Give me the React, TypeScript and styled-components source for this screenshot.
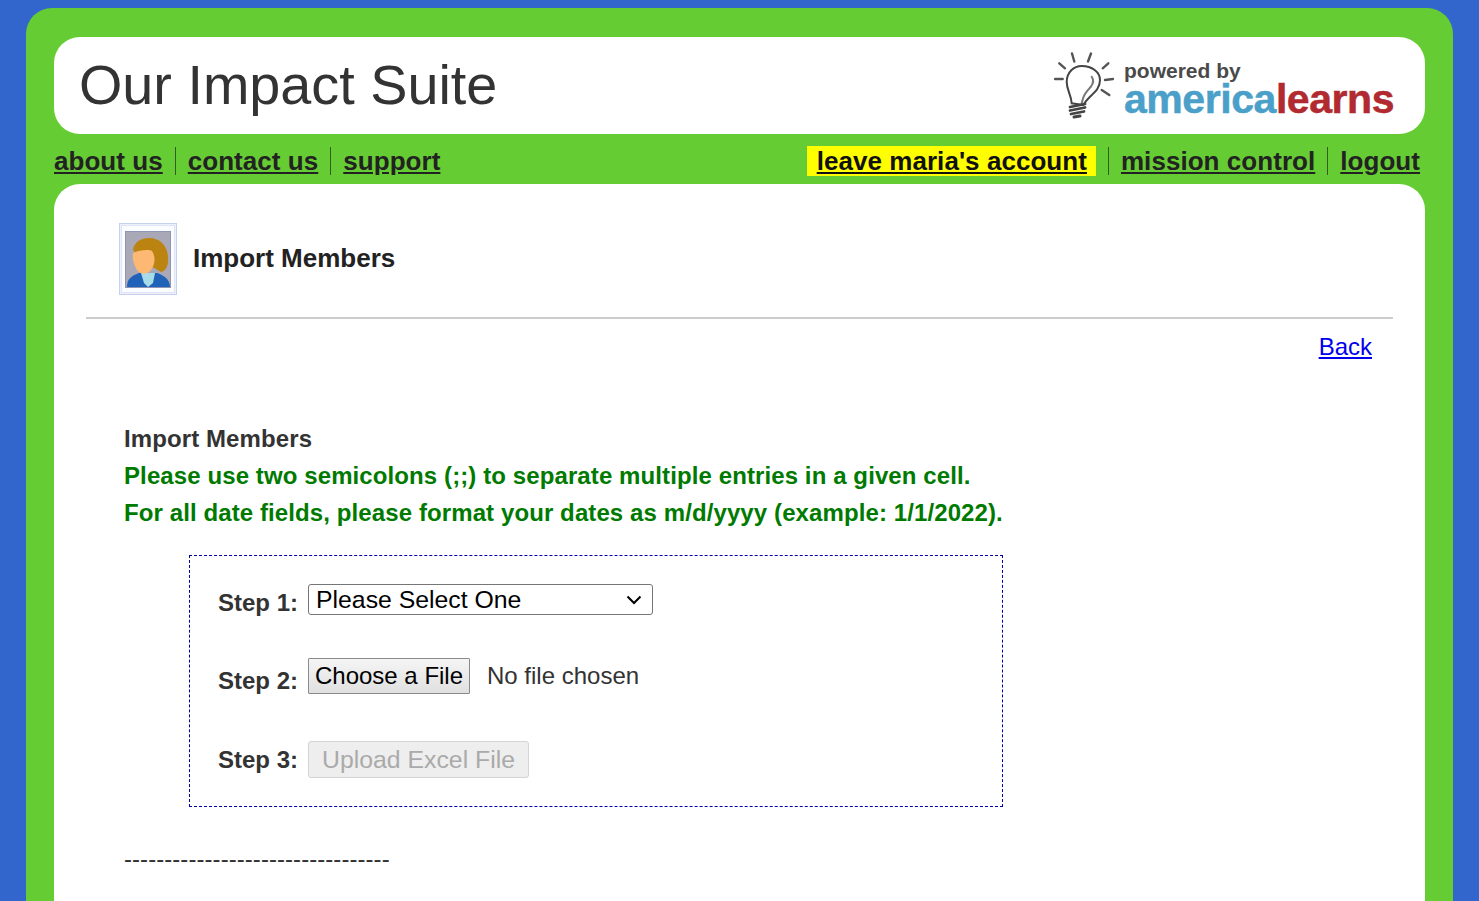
import React from "react";
import styled, { createGlobalStyle } from "styled-components";

const Global = createGlobalStyle`
  html, body { margin: 0; padding: 0; height: 100%; overflow: hidden; background: #3366cc; }
  body { font-family: "Liberation Sans", Arial, sans-serif; color: #333; }
`;
const Shell = styled.div`
  margin: 8px 26px 0;
  height: 893px;
  overflow: hidden;
  background: #66cc33;
  border-radius: 26px 26px 0 0;
  padding: 29px 28px 0;
`;
const Header = styled.header`
  height: 97px;
  background: #fff;
  border-radius: 26px;
  display: flex;
  align-items: center;
  justify-content: space-between;
  padding: 0 31px 0 25px;
`;
const Title = styled.h1`
  margin: 0 0 1px;
  font-size: 55.75px;
  font-weight: 400;
  color: #333;
  line-height: 64px;
`;
const Logo = styled.div`
  display: flex;
  align-items: flex-start;
  gap: 10px;
  height: 72px;
  margin-top: 4px;
`;
const LogoText = styled.div`
  display: flex;
  flex-direction: column;
  padding-top: 9px;
`;
const Powered = styled.span`
  font-size: 21px;
  font-weight: 700;
  line-height: 20px;
  color: #4a4a4a;
`;
const Brand = styled.span`
  font-size: 41px;
  font-weight: 700;
  line-height: 36px;
  letter-spacing: -0.45px;
  -webkit-text-stroke: 0.5px currentColor;
  color: #4aa0c8;
  white-space: nowrap;
`;
const BrandRed = styled.span`
  color: #b02a30;
`;
const NavBar = styled.nav`
  height: 50px;
  display: flex;
  justify-content: space-between;
  align-items: flex-start;
  padding: 12px 5px 0 0;
  box-sizing: border-box;
`;
const NavGroup = styled.div`
  display: flex;
  align-items: center;
`;
const NavLink = styled.a<{ $highlight?: boolean; $first?: boolean; $last?: boolean }>`
  font-size: 26px;
  font-weight: 700;
  line-height: 30px;
  letter-spacing: 0.05px;
  text-decoration: underline;
  padding: 0 ${(p) => (p.$last ? "0" : p.$highlight ? "9px" : "12px")} 0 ${(p) => (p.$first ? "0" : p.$highlight ? "10px" : "12px")};
  background: ${(p) => (p.$highlight ? "#ffff00" : "transparent")};
  color: ${(p) => (p.$highlight ? "#111" : "#222")};
`;
const Sep = styled.span<{ $gap?: number }>`
  width: 1px;
  height: 28px;
  background: #2f5f1a;
  margin-left: ${(p) => p.$gap ?? 0}px;
`;
const Panel = styled.main`
  background: #fff;
  border-radius: 26px 26px 0 0;
  height: 800px;
  padding: 0 32px;
`;
const PageHead = styled.div`
  height: 135px;
  box-sizing: border-box;
  display: flex;
  align-items: center;
  gap: 16px;
  padding: 15px 0 0 33px;
  border-bottom: 2px solid #ccc;
`;
const PageTitle = styled.h2`
  margin: 0;
  font-size: 26px;
  font-weight: 700;
  color: #222;
`;
const BackRow = styled.div`
  display: flex;
  justify-content: flex-end;
  padding: 13px 21px 0 0;
  height: 60px;
`;
const BackLink = styled.a`
  font-size: 24px;
  line-height: 30px;
  color: #0000ee;
  text-decoration: underline;
`;
const Body = styled.div`
  padding: 28px 0 0 38px;
`;
const Line = styled.div<{ $green?: boolean }>`
  font-size: 24px;
  font-weight: 700;
  line-height: 37px;
  letter-spacing: 0.1px;
  color: ${(p) => (p.$green ? "#007a00" : "#333")};
`;
const StepBox = styled.div`
  width: 814px;
  height: 252px;
  box-sizing: border-box;
  margin: 24px 0 0 65px;
  border: 1px dashed #0000aa;
  padding: 28px 0 0 28px;
  display: flex;
  flex-direction: column;
`;
const StepRow = styled.div<{ $height: number }>`
  display: flex;
  align-items: flex-start;
  gap: 10px;
  height: ${(p) => p.$height}px;
`;
const StepLabel = styled.label<{ $top: number }>`
  font-size: 24px;
  font-weight: 700;
  line-height: 30px;
  color: #333;
  margin-top: ${(p) => p.$top}px;
`;
const Select = styled.select`
  width: 345px;
  height: 31px;
  font-family: "Liberation Sans", Arial, sans-serif;
  font-size: 24.8px;
  color: #000;
  appearance: none;
  background: #fff url("data:image/svg+xml,%3Csvg xmlns='http://www.w3.org/2000/svg' width='16' height='10'%3E%3Cpath d='M1.5 1.5 L8 8 L14.5 1.5' fill='none' stroke='%23000' stroke-width='2'/%3E%3C/svg%3E") no-repeat right 10px center;
  border: 1px solid #767676;
  border-radius: 3px;
  padding: 0 7px;
`;
const FileButton = styled.button`
  height: 36px;
  width: 162px;
  padding: 0;
  font-family: "Liberation Sans", Arial, sans-serif;
  font-size: 24px;
  color: #000;
  background: linear-gradient(#f5f5f5, #e0e0e0);
  border: 1px solid #8a8a8a;
  border-radius: 1px;
`;
const NoFile = styled.span`
  font-size: 24px;
  line-height: 36px;
  margin-left: 7px;
  color: #333;
`;
const UploadButton = styled.button`
  height: 37px;
  width: 221px;
  padding: 0;
  font-family: "Liberation Sans", Arial, sans-serif;
  font-size: 24.8px;
  color: #aaa;
  background: #eee;
  border: 1px solid #d4d4d4;
  border-radius: 3px;
`;
const Dashes = styled.div`
  margin-top: 34px;
  font-size: 24px;
  line-height: 36px;
  letter-spacing: 0.06px;
  color: #333;
`;
const PortraitSvg = styled.svg`
  filter: blur(0.5px);
  margin-top: 2px;
`;
const BulbSvg = styled.svg`
  filter: blur(0.3px);
`;

const Bulb = () => (
  <BulbSvg width="60" height="68" viewBox="0 0 60 68" fill="none" stroke="#444" strokeLinecap="round">
    <g strokeWidth="2.4" stroke="#555">
      <path d="M18 1.5 L20.3 9.5" />
      <path d="M37 1.5 L34 9.5" />
      <path d="M5.3 11.3 L11 16.3" />
      <path d="M54.3 11.3 L48.7 16.3" />
      <path d="M1 27 L8.7 27" />
      <path d="M59 27 L51 28" />
      <path d="M47.7 38 L55.3 43" />
    </g>
    <path d="M17.7 51.3 C17 42 12.7 38 12.7 30 C12.7 20 20 14 27.7 14 C38 14 46 20 46 28 C46 36 41 40 36 44.7 C33 47.5 31 50 29.3 53 Z" strokeWidth="2" />
    <path d="M37.7 24.7 C40 28 39.5 31 37 34.5 C34 38 31 41 29.5 45 C28.5 48 28 50 27.7 51.3" strokeWidth="2" stroke="#777" />
    <path d="M16 55 L31 52 M16 58.5 L31 55.5 M17 62 L30 59.5" strokeWidth="2.8" stroke="#444" />
    <path d="M20 65 L26 64" strokeWidth="3" stroke="#444" />
  </BulbSvg>
);

const Portrait = () => (
  <PortraitSvg width="58" height="72" viewBox="0 0 58 72">
    <rect x="0.5" y="0.5" width="57" height="71" fill="#eef1fb" stroke="#c5cfee" />
    <rect x="2.5" y="2.5" width="53" height="67" fill="#fbfcff" stroke="#dfe4f6" />
    <rect x="6.5" y="8.5" width="45" height="56" fill="#a8a8b6" stroke="#9294b4" />
    <path d="M14 27 C15 19 22 15 30 15 C42 15 50 24 49 38 C49 44 46 48 42 49 L30 42 Z" fill="#bb8410" />
    <path d="M8 64 C8 56 12 53 20 50 L38 50 C44 52 51 56 51 64 Z" fill="#1f62b8" />
    <path d="M22 50 L36 50 L34 60 L29 64 L25 60 Z" fill="#a8dbe8" />
    <path d="M14 30 C20 27 30 26 33 28 C37 34 36 42 32 47 C28 52 22 52 18 47 C15 42 13 36 14 30 Z" fill="#fdb873" />
  </PortraitSvg>
);

export default function App() {
  return (
    <>
      <Global />
      <Shell>
        <Header>
          <Title>Our Impact Suite</Title>
          <Logo>
            <Bulb />
            <LogoText>
              <Powered>powered by</Powered>
              <Brand>
                america<BrandRed>learns</BrandRed>
              </Brand>
            </LogoText>
          </Logo>
        </Header>
        <NavBar>
          <NavGroup>
            <NavLink $first>about us</NavLink>
            <Sep />
            <NavLink>contact us</NavLink>
            <Sep />
            <NavLink>support</NavLink>
          </NavGroup>
          <NavGroup>
            <NavLink $highlight>leave maria's account</NavLink>
            <Sep $gap={12} />
            <NavLink>mission control</NavLink>
            <Sep />
            <NavLink $last>logout</NavLink>
          </NavGroup>
        </NavBar>
        <Panel>
          <PageHead>
            <Portrait />
            <PageTitle>Import Members</PageTitle>
          </PageHead>
          <BackRow>
            <BackLink href="#">Back</BackLink>
          </BackRow>
          <Body>
            <Line>Import Members</Line>
            <Line $green>Please use two semicolons (;;) to separate multiple entries in a given cell.</Line>
            <Line $green>For all date fields, please format your dates as m/d/yyyy (example: 1/1/2022).</Line>
            <StepBox>
              <StepRow $height={74}>
                <StepLabel $top={4}>Step 1:</StepLabel>
                <Select defaultValue="">
                  <option value="">Please Select One</option>
                </Select>
              </StepRow>
              <StepRow $height={83}>
                <StepLabel $top={8}>Step 2:</StepLabel>
                <FileButton>Choose a File</FileButton>
                <NoFile>No file chosen</NoFile>
              </StepRow>
              <StepRow $height={40}>
                <StepLabel $top={4}>Step 3:</StepLabel>
                <UploadButton disabled>Upload Excel File</UploadButton>
              </StepRow>
            </StepBox>
            <Dashes>---------------------------------</Dashes>
          </Body>
        </Panel>
      </Shell>
    </>
  );
}
